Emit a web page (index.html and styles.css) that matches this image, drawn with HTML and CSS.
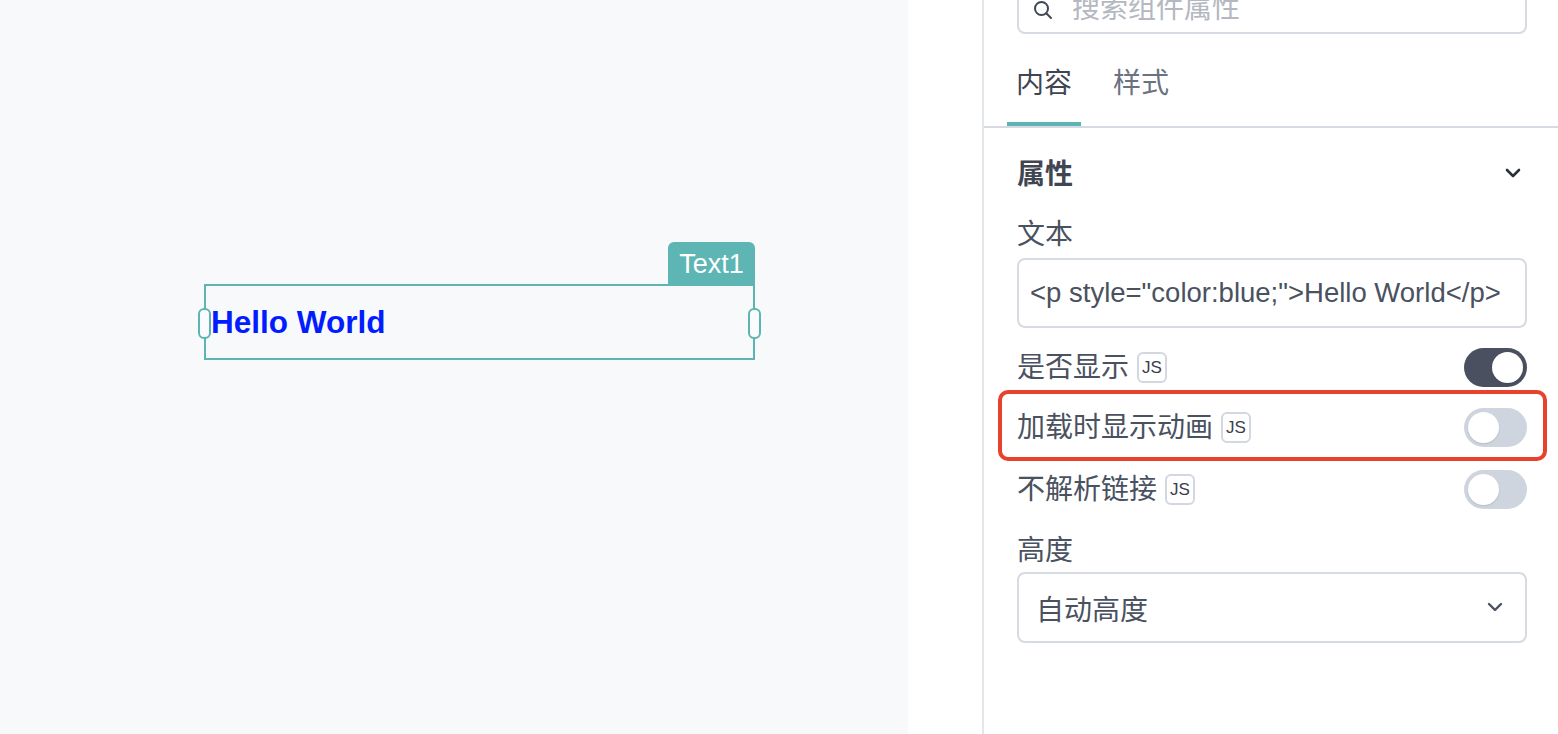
FILE: index.html
```html
<!DOCTYPE html>
<html lang="zh-CN">
<head>
    <meta charset="UTF-8">
    <meta name="viewport" content="width=device-width, initial-scale=1.0">
    <title>Text1 - 编辑器</title>
    <link rel="stylesheet" href="styles.css">
</head>
<body>
    <main class="canvas">
        <div class="widget">
            <span class="widget-tag">Text1</span>
            <div class="widget-body"><p class="hello">Hello World</p></div>
            <span class="handle handle-left"></span>
            <span class="handle handle-right"></span>
        </div>
    </main>
    <div class="gutter"></div>
    <aside class="panel">
        <div class="panel-top">
            <div class="search">
                <svg class="search-icon" width="20" height="20" viewBox="0 0 20 20"><circle cx="8.5" cy="8.5" r="6.5" fill="none" stroke="#404753" stroke-width="2"/><path d="M13.5 13.5 L18 18" stroke="#404753" stroke-width="2" stroke-linecap="round"/></svg>
                <span class="search-placeholder">搜索组件属性</span>
            </div>
        </div>
        <nav class="tabs">
            <a class="tab active" href="#">内容</a>
            <a class="tab" href="#">样式</a>
        </nav>
        <div class="panel-body">
            <div class="section-head">
                <span>属性</span>
                <svg width="16" height="11" viewBox="0 0 16 11"><path d="M2 2 L8 8 L14 2" fill="none" stroke="#2b2f36" stroke-width="2.6" stroke-linecap="round" stroke-linejoin="round"/></svg>
            </div>

            <div class="field-label field-label-first">文本</div>
            <div class="text-input">&lt;p style="color:blue;"&gt;Hello World&lt;/p&gt;</div>

            <div class="switch-row row-visible">
                <span class="row-label">是否显示</span><span class="js-badge">JS</span>
                <span class="toggle on"><span class="knob"></span></span>
            </div>
            <div class="switch-row row-anim highlighted">
                <span class="row-label">加载时显示动画</span><span class="js-badge">JS</span>
                <span class="toggle"><span class="knob"></span></span>
            </div>
            <div class="switch-row row-link">
                <span class="row-label">不解析链接</span><span class="js-badge">JS</span>
                <span class="toggle"><span class="knob"></span></span>
            </div>

            <div class="field-label field-label-height">高度</div>
            <div class="select">
                <span>自动高度</span>
                <svg width="16" height="11" viewBox="0 0 16 11"><path d="M2 2 L8 8 L14 2" fill="none" stroke="#4a5160" stroke-width="2.4" stroke-linecap="round" stroke-linejoin="round"/></svg>
            </div>
        </div>
    </aside>
</body>
</html>
```

FILE: styles.css
```css
* { box-sizing: border-box; }
html, body { height: 100%; }
body { margin: 0; display: flex; overflow: hidden; background: #fff; font-family: "Liberation Sans", "Noto Sans CJK SC", sans-serif; color: #4a5160; }

/* canvas */
.canvas { position: relative; width: 908px; flex-shrink: 0; height: 734px; background: #f8f9fb; }
.widget { position: absolute; left: 204px; top: 284px; width: 551px; height: 76px; border: 2px solid #5cb5b3; }
.widget-tag { position: absolute; right: -2px; bottom: 100%; height: 44px; width: 87px; background: #5db6b4; color: #fff; border-radius: 6px 6px 0 0; font-size: 27px; line-height: 44px; text-align: center; }
.widget-body { height: 100%; display: flex; align-items: center; padding-left: 5px; }
.hello { margin: 0; color: #001cff; font-size: 31.5px; font-weight: bold; line-height: 36px; }
.handle { position: absolute; top: 22px; width: 13px; height: 31px; background: #fafbfc; border: 2px solid #5cb5b3; border-radius: 6px; }
.handle-left { left: -8px; }
.handle-right { right: -8px; }

.gutter { width: 76px; flex-shrink: 0; border-right: 2px solid #e3e6eb; }

/* panel */
.panel { width: 574px; flex-shrink: 0; }
.panel-top { padding: 0 31px 0 33px; }
.search { margin-top: -26px; height: 60px; border: 2px solid #d6dae1; border-radius: 8px; display: flex; align-items: center; padding-left: 14px; }
.search-icon { margin-top: 12px; }
.search-placeholder { margin-left: 19px; font-size: 28px; line-height: 40px; color: #b3b8c1; margin-top: 10px; }

.tabs { display: flex; gap: 23px; padding-left: 23px; border-bottom: 2px solid #d6dae1; }
.tab { display: block; padding: 30px 9px 22px; font-size: 28px; line-height: 40px; color: #6b7280; text-decoration: none; }
.tab.active { color: #3f4652; padding-bottom: 18px; border-bottom: 4px solid #5cb5b3; }

.panel-body { padding: 0 31px 0 33px; }
.section-head { margin-top: 27px; display: flex; justify-content: space-between; align-items: center; font-size: 28px; line-height: 40px; font-weight: bold; color: #3f4652; }
.section-head svg { margin-right: 6px; margin-top: -4px; }

.field-label { font-size: 28px; line-height: 40px; color: #4a5160; }
.field-label-first { margin-top: 20px; }
.field-label-height { margin-top: 22px; }

.text-input { margin-top: 3px; height: 70px; border: 2px solid #d6dae1; border-radius: 8px; padding-left: 11px; display: flex; align-items: center; font-size: 27.5px; color: #4a5160; white-space: nowrap; overflow: hidden; }

.switch-row { position: relative; display: flex; align-items: center; height: 39px; }
.row-visible { margin-top: 20px; }
.row-anim { margin-top: 21px; }
.row-link { margin-top: 23px; }
.row-label { font-size: 28px; line-height: 40px; color: #4a5160; }
.js-badge { margin-left: 8px; width: 30px; height: 31px; border: 2px solid #d3d8e0; border-radius: 6px; font-size: 17px; color: #3a404b; display: flex; align-items: center; justify-content: center; }
.toggle { margin-left: auto; position: relative; width: 63px; height: 39px; border-radius: 20px; background: #cfd5de; }
.toggle .knob { position: absolute; top: 4px; left: 4px; width: 31px; height: 31px; border-radius: 50%; background: #fff; box-shadow: 0 1px 2px rgba(0,0,0,0.12); }
.toggle.on { background: #4a5060; }
.toggle.on .knob { left: auto; right: 4px; }

.highlighted::after { content: ""; position: absolute; left: -19px; right: -20px; top: -18px; bottom: -14px; border: 4px solid #e8412c; border-radius: 10px; }

.select { margin-top: 1px; height: 71px; border: 2px solid #d6dae1; border-radius: 8px; padding: 0 22px 0 17px; display: flex; align-items: center; justify-content: space-between; font-size: 28px; color: #4a5160; }
```
